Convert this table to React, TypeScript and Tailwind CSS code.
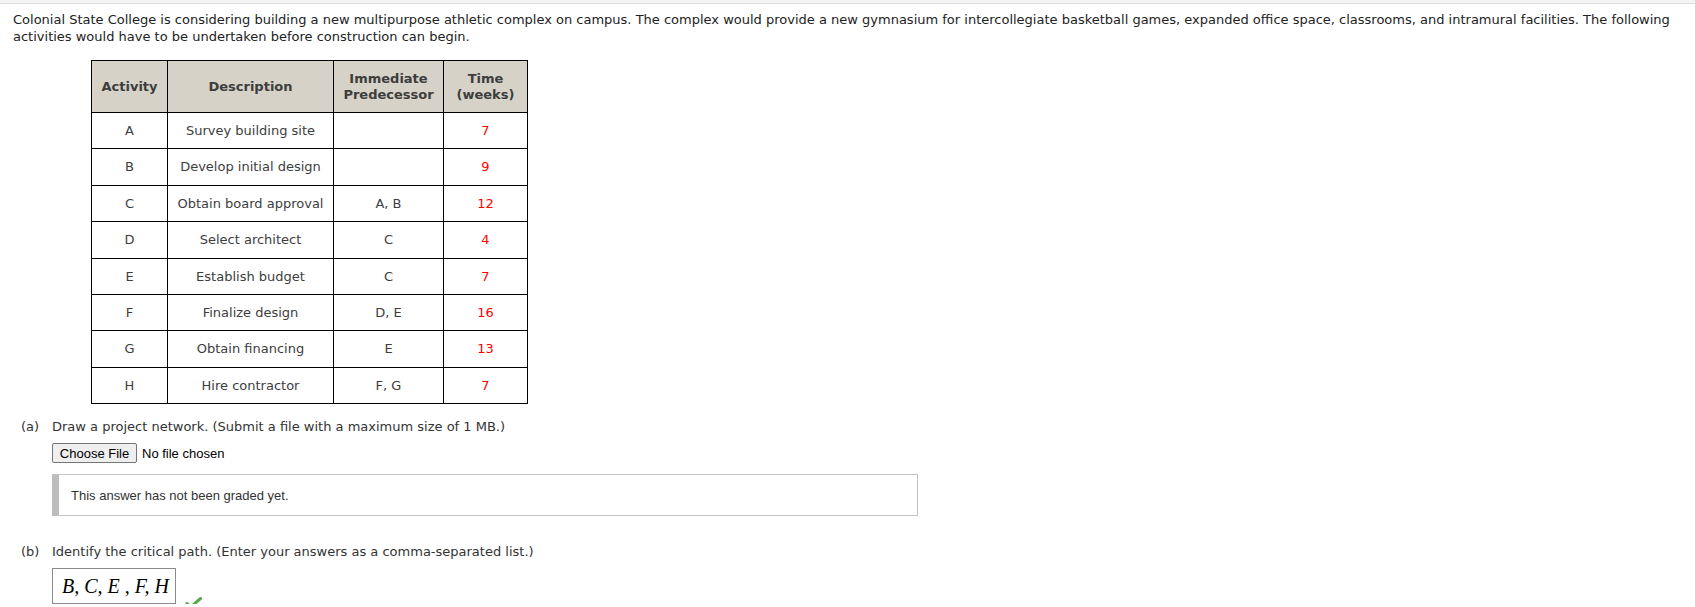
import React from "react";

// Rows of the activity table: letter, description, predecessors, weeks.
const ROWS: [string, string, string, number][] = [
  ["A", "Survey building site", "", 7],
  ["B", "Develop initial design", "", 9],
  ["C", "Obtain board approval", "A, B", 12],
  ["D", "Select architect", "C", 4],
  ["E", "Establish budget", "C", 7],
  ["F", "Finalize design", "D, E", 16],
  ["G", "Obtain financing", "E", 13],
  ["H", "Hire contractor", "F, G", 7],
];

function Check() {
  return (
    <svg width="17" height="12" viewBox="0 0 17 12" className="ml-[9px] mb-[-5px] shrink-0">
      <path
        d="M1.8 6.5 L5.8 10 L15.5 1.5"
        fill="none"
        stroke="#5aa84f"
        strokeWidth="3"
        strokeLinecap="round"
        strokeLinejoin="round"
      />
    </svg>
  );
}

export default function App() {
  return (
    <div className="font-['DejaVu_Sans',Verdana,sans-serif] text-[13px] text-[#222] bg-white">
      <div className="h-[4px] bg-[#f4f4f4] border-b border-[#dcdcdc]" />

      <div className="pl-[13px] pt-[7px]">
        <p className="leading-[17px]">
          Colonial State College is considering building a new multipurpose athletic complex on campus. The complex
          would provide a new gymnasium for intercollegiate basketball games, expanded office space, classrooms, and
          intramural facilities. The following
          <br />
          activities would have to be undertaken before construction can begin.
        </p>

        <table className="ml-[78px] mt-[15px] border-collapse table-fixed w-[436px] text-[#3d3d3d]">
          <colgroup>
            <col className="w-[76px]" />
            <col className="w-[166px]" />
            <col className="w-[110px]" />
            <col className="w-[84px]" />
          </colgroup>
          <thead>
            <tr className="h-[52px] bg-[#d6d2c7] font-bold leading-[16px]">
              <th className="border border-black">Activity</th>
              <th className="border border-black">Description</th>
              <th className="border border-black">
                Immediate
                <br />
                Predecessor
              </th>
              <th className="border border-black">
                Time
                <br />
                (weeks)
              </th>
            </tr>
          </thead>
          <tbody>
            {ROWS.map(([act, desc, pred, weeks]) => (
              <tr key={act} className="h-[36.4px] text-center">
                <td className="border border-black">{act}</td>
                <td className="border border-black">{desc}</td>
                <td className="border border-black">{pred}</td>
                <td className="border border-black text-[#ff0000]">{weeks}</td>
              </tr>
            ))}
          </tbody>
        </table>

        {/* part (a) */}
        <div className="ml-[8px] mt-[14px] flex leading-[17px] text-[#333]">
          <span className="w-[31px] shrink-0">(a)</span>
          <div className="flex flex-col">
            <span>Draw a project network. (Submit a file with a maximum size of 1 MB.)</span>
            <div className="mt-[8px] flex items-center font-['Liberation_Sans',Arial,sans-serif] text-[13px] text-black">
              <span className="h-[20px] w-[85px] flex items-center justify-center rounded-[2px] border border-[#767676] bg-[#efefef]">
                Choose File
              </span>
              <span className="ml-[5px]">No file chosen</span>
            </div>
            <div className="mt-[11px] w-[866px] h-[42px] flex items-center border border-[#c4c4c4] border-l-[7px] border-l-[#bdbdbd] pl-[12px] font-['Liberation_Sans',Arial,sans-serif] text-[13px] text-[#333]">
              This answer has not been graded yet.
            </div>
          </div>
        </div>

        {/* part (b) */}
        <div className="ml-[8px] mt-[27px] flex leading-[17px] text-[#333]">
          <span className="w-[31px] shrink-0">(b)</span>
          <div className="flex flex-col">
            <span>Identify the critical path. (Enter your answers as a comma-separated list.)</span>
            <div className="mt-[8px] flex items-end">
              <div className="h-[36px] w-[124px] flex items-center border border-[#8a8a8a] pl-[9px] font-['Liberation_Serif','Times_New_Roman',serif] italic text-[20px] text-black">
                B, C, E , F, H
              </div>
              <Check />
            </div>
          </div>
        </div>
      </div>
    </div>
  );
}
